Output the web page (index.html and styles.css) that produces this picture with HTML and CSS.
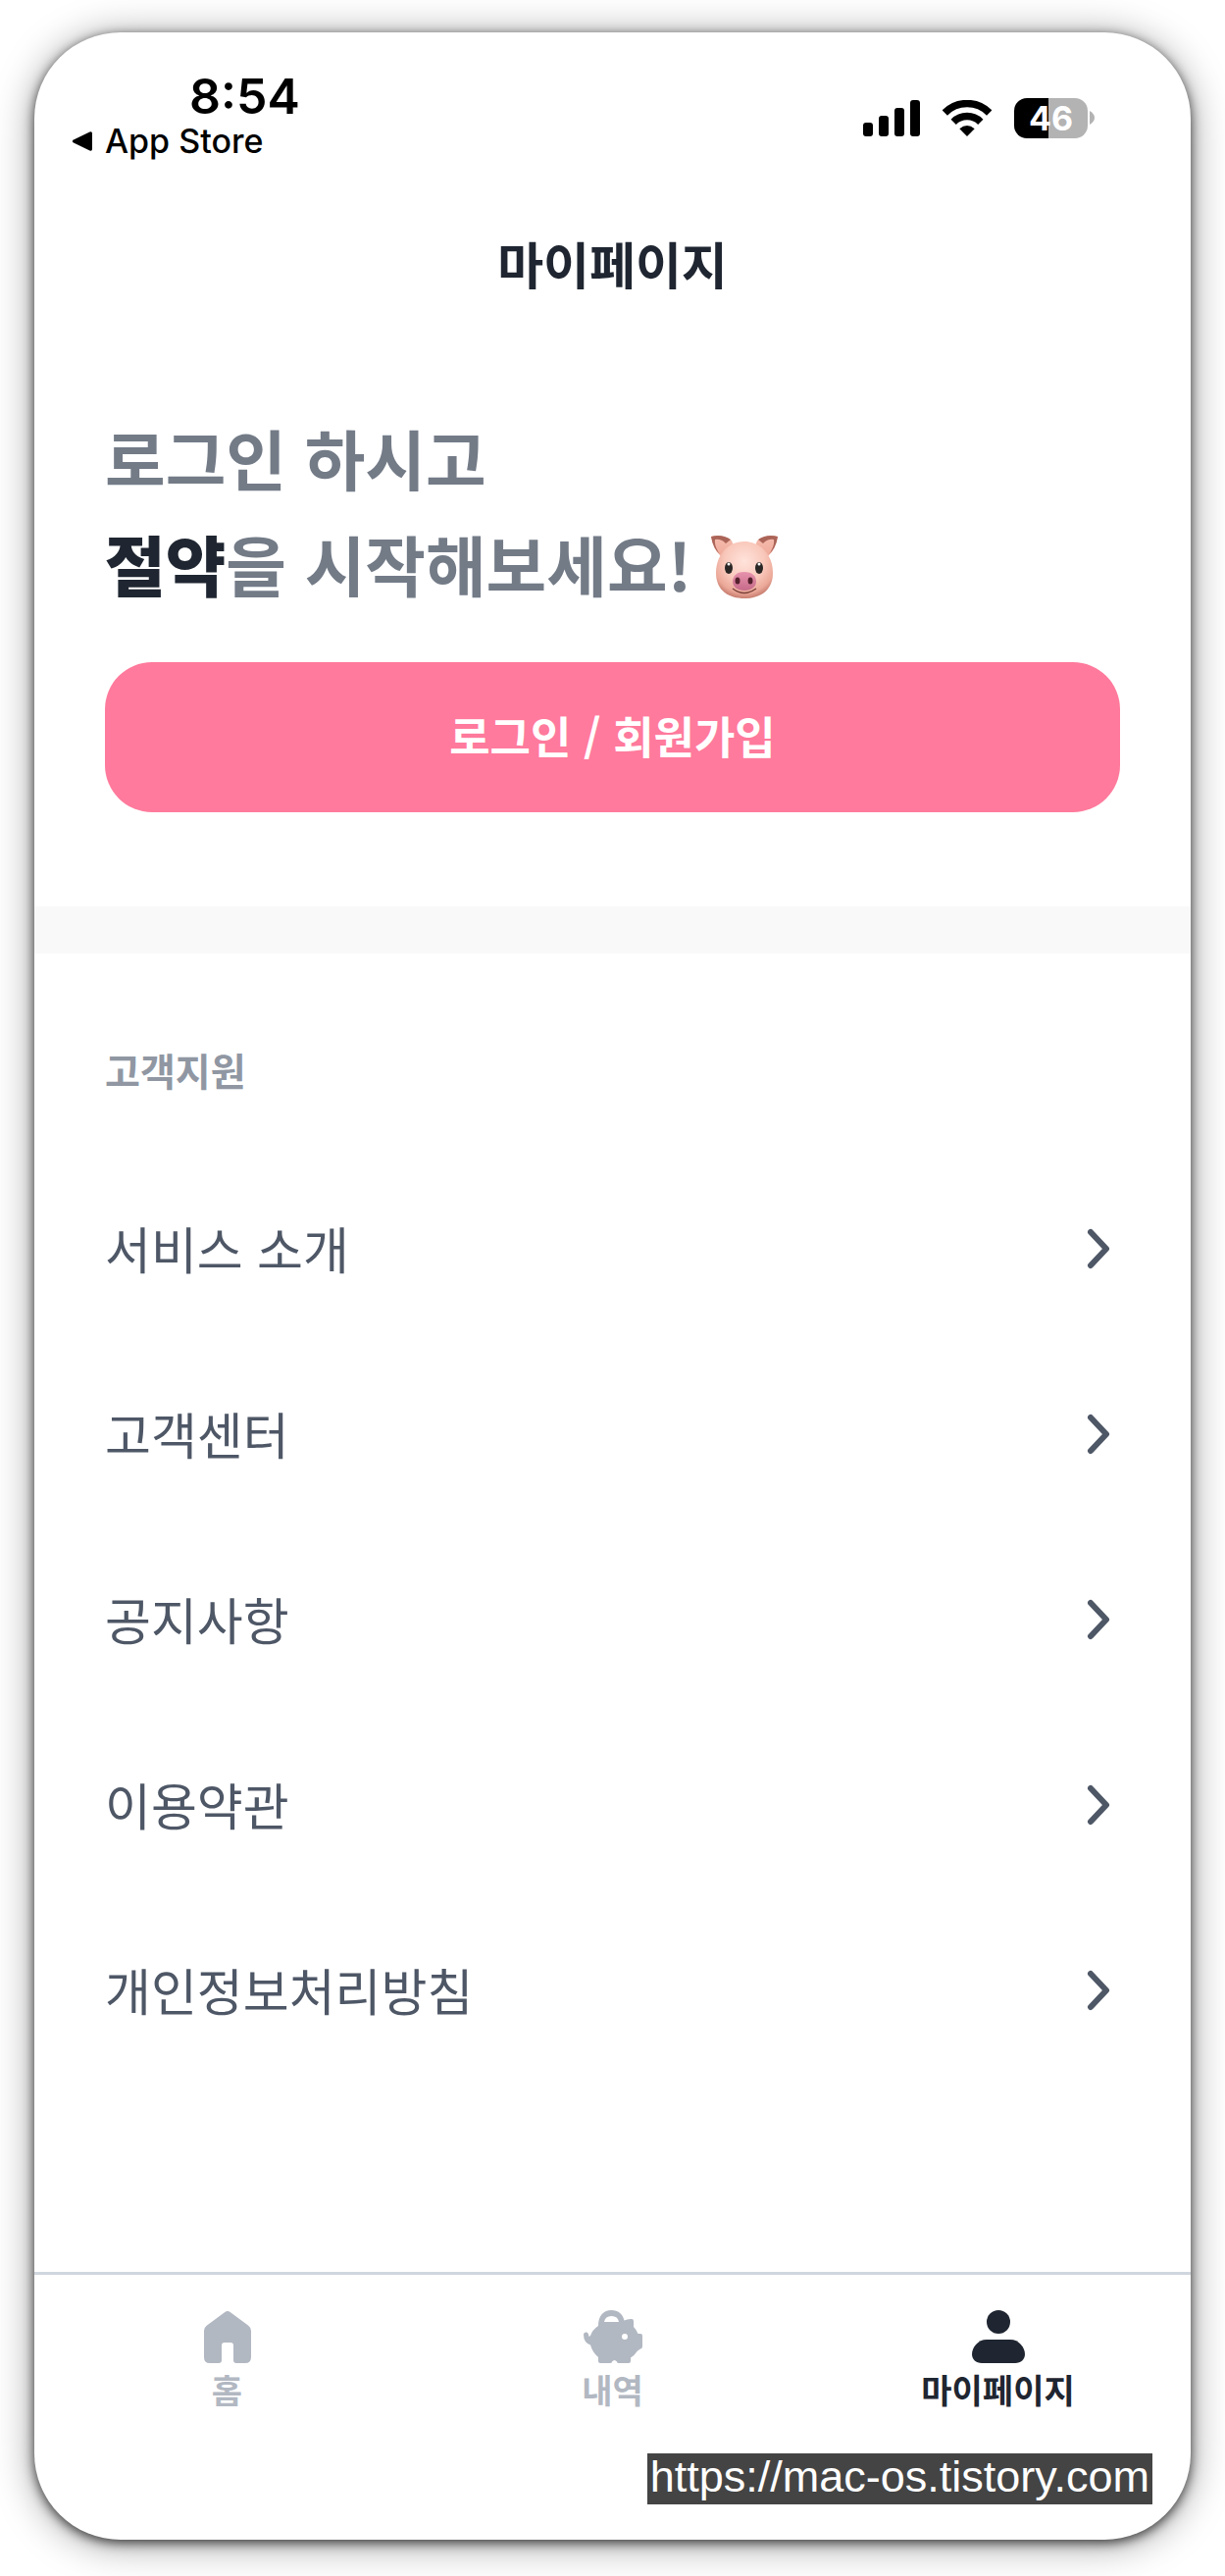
FILE: index.html
```html
<!DOCTYPE html>
<html lang="ko">

<head>
    <meta charset="UTF-8">
    <meta name="viewport" content="width=device-width, initial-scale=1.0">
    <title>마이페이지</title>
    <link rel="stylesheet" href="styles.css">
</head>

<body>
    <div class="phone">
        <div class="status-bar">
            <div class="status-left">
                <span class="time">8:54</span>
                <a href="#" class="back-app">
                    <svg width="22" height="22" viewBox="0 0 22 22"><path d="M2.5 9.2 18.5 1.4Q21 .6 21 3V19Q21 21.400 18.500 20.600L2.500 12.800Q-1 11 2.500 9.200Z"/></svg>
                    App Store
                </a>
            </div>
            <div class="status-icons">
                <svg width="58" height="37" viewBox="0 0 58 37">
                    <rect x="0" y="23" width="10" height="14" rx="3"/>
                    <rect x="16" y="16" width="10" height="21" rx="3"/>
                    <rect x="32" y="8" width="10" height="29" rx="3"/>
                    <rect x="48" y="0" width="10" height="37" rx="3"/>
                </svg>
                <svg width="50" height="37" viewBox="0 0 50 37">
                    <path d="M2.300 13A32 32 0 0 1 47.700 13" fill="none" stroke="#000" stroke-width="7.500"/>
                    <path d="M11.200 22.300A19.500 19.500 0 0 1 38.800 22.300" fill="none" stroke="#000" stroke-width="7.500"/>
                    <path d="M25 37 17.300 29.300Q25 22.700 32.700 29.300Z"/>
                </svg>
                <div class="battery">
                    <span class="battery-level">46</span>
                    <svg width="5" height="14" viewBox="0 0 5 14"><path d="M0 0Q5 3 5 7T0 14Z" fill="#b3b3b3"/></svg>
                </div>
            </div>
        </div>

        <header class="page-header">
            <h1>마이페이지</h1>
        </header>

        <section class="hero">
            <h2>로그인 하시고<br><strong>절약</strong>을 시작해보세요!
                <svg class="pig" width="70" height="66" viewBox="0 0 70 66" role="img" aria-label="돼지">
                    <defs>
                        <radialGradient id="face" cx=".5" cy=".35" r=".65">
                            <stop offset="0" stop-color="#ffe3db"/>
                            <stop offset=".55" stop-color="#f9c8bb"/>
                            <stop offset=".85" stop-color="#eba898"/>
                            <stop offset="1" stop-color="#c87e70"/>
                        </radialGradient>
                        <linearGradient id="snout" x1="0" y1="0" x2="0" y2="1">
                            <stop offset="0" stop-color="#e793ad"/>
                            <stop offset="1" stop-color="#c66a89"/>
                        </linearGradient>
                        <linearGradient id="ear" x1="0" y1="0" x2="0" y2="1">
                            <stop offset="0" stop-color="#f4bcae"/>
                            <stop offset="1" stop-color="#f0ab9b"/>
                        </linearGradient>
                    </defs>
                    <path d="M1 2Q12-1 22 6L24 12 11 22Q3 15 1 2Z" fill="url(#ear)"/>
                    <path d="M1 2Q12-1 21 5L16 9Q11 4 5 5 4 12 10 20 3 14 1 2Z" fill="#ab6458"/>
                    <path d="M69 2Q58-1 48 6L46 12 59 22Q67 15 69 2Z" fill="url(#ear)"/>
                    <path d="M69 2Q58-1 49 5L54 9Q59 4 65 5 66 12 60 20 67 14 69 2Z" fill="#ab6458"/>
                    <path d="M35 7C17 7 6 22 6 39C6 57 19 65 35 65S64 57 64 39C64 22 53 7 35 7Z" fill="url(#face)"/>
                    <ellipse cx="19" cy="34" rx="4" ry="6" fill="#292625"/>
                    <ellipse cx="50" cy="34" rx="4" ry="6" fill="#292625"/>
                    <circle cx="19" cy="30" r="1.500" fill="#fff"/>
                    <circle cx="50" cy="30" r="1.500" fill="#fff"/>
                    <path d="M23 55Q35 64 47 55" fill="none" stroke="#7a4039" stroke-width="1.500"/>
                    <path d="M35 38C26 38 23 43 23 48S28 57 35 57 47 53 47 48 44 38 35 38Z" fill="url(#snout)"/>
                    <ellipse cx="28" cy="47" rx="2.500" ry="3.500" fill="#54202d"/>
                    <ellipse cx="41" cy="47" rx="2.500" ry="3.500" fill="#54202d"/>
                </svg>
            </h2>
            <button type="button" class="login-button">로그인 / 회원가입</button>
        </section>

        <section class="support">
            <h3>고객지원</h3>
            <nav class="menu">
                <a href="#">서비스 소개 <svg class="chevron" viewBox="0 0 24 42"><path d="M4 4 20 21 4 38"/></svg></a>
                <a href="#">고객센터 <svg class="chevron" viewBox="0 0 24 42"><path d="M4 4 20 21 4 38"/></svg></a>
                <a href="#">공지사항 <svg class="chevron" viewBox="0 0 24 42"><path d="M4 4 20 21 4 38"/></svg></a>
                <a href="#">이용약관 <svg class="chevron" viewBox="0 0 24 42"><path d="M4 4 20 21 4 38"/></svg></a>
                <a href="#">개인정보처리방침 <svg class="chevron" viewBox="0 0 24 42"><path d="M4 4 20 21 4 38"/></svg></a>
            </nav>
        </section>

        <nav class="tab-bar">
            <a href="#">
                <svg width="50" height="54" viewBox="0 0 50 54">
                    <path d="M22 2.200Q25 0 28 2.200L46 15.500Q49 17.700 49 21V48Q49 54 43 54H34Q31 54 31 51V36Q31 33 28 33H22Q19 33 19 36V51Q19 54 16 54H7Q1 54 1 48V21Q1 17.700 4 15.500Z"/>
                </svg>
                홈
            </a>
            <a href="#">
                <svg width="60" height="54" viewBox="0 0 60 54">
                    <path fill-rule="evenodd" d="M15 16C15 6 20 0 28.500 0C35 0 40 4 41.500 10.500Q45 8.700 49 9Q51 9 51 11V17Q54 20 55.500 24H58Q60 24 60 26V37Q60 39 58 39.500L55 41.500Q52 46 48 48.500V52Q48 54 46 54H36Q34 54 34 52.500Q31.500 49.500 29 52.500Q29 54 27 54H17Q15 54 15 52V48Q9 43 7 35.500Q0 33 0 25Q0 22.500 2.700 22.500Q5 22.500 5.500 27L7 26Q9 20 15 16ZM21 12H36Q35 6 28.500 6T21 12ZM42 24A3 3 0 1 0 42 30A3 3 0 1 0 42 24Z"/>
                </svg>
                내역
            </a>
            <a href="#" class="active" aria-current="page">
                <svg width="54" height="54" viewBox="0 0 54 54">
                    <circle cx="27" cy="12" r="12"/>
                    <path d="M15 30H39C48 30 54 38 54 45C54 50 50 54 44 54H10C4 54 0 50 0 45C0 38 6 30 15 30Z"/>
                </svg>
                마이페이지
            </a>
        </nav>

        <a href="https://mac-os.tistory.com" class="watermark">https://mac-os.tistory.com</a>
    </div>
</body>

</html>
```
FILE: styles.css
```css
* {
    box-sizing: border-box;
}

body {
    margin: 0;
    padding: 33px 35px 37px;
    background: #fff;
    font-family: "Noto Sans CJK KR", sans-serif;
    color: #1f2631;
}

a {
    color: inherit;
    text-decoration: none;
}

h1,
h2,
h3 {
    margin: 0;
}

.phone {
    position: relative;
    display: flex;
    flex-direction: column;
    min-height: calc(100vh - 70px);
    background: #fff;
    border-radius: 88px;
    box-shadow: 0 3px 12px rgba(0, 0, 0, 0.7), 0 4px 40px rgba(0, 0, 0, 0.4);
}

/* Status bar */
.status-bar {
    display: flex;
    justify-content: space-between;
    align-items: center;
    padding: 37px 98px 0 38px;
    font-family: Inter, sans-serif;
    color: #000;
}

.status-left {
    display: flex;
    flex-direction: column;
}

.time {
    padding-left: 120px;
    font-size: 50px;
    font-weight: 600;
    line-height: 56px;
}

.back-app {
    display: flex;
    align-items: center;
    gap: 12px;
    font-size: 34px;
    font-weight: 500;
    line-height: 36px;
}

.status-icons {
    display: flex;
    align-items: center;
    gap: 23px;
    padding-top: 8px;
}

.battery {
    display: flex;
    align-items: center;
    gap: 2px;
}

.battery-level {
    width: 75px;
    border-radius: 13px;
    background: linear-gradient(90deg, #000 47%, #b3b3b3 47%);
    color: #fff;
    font-size: 34px;
    font-weight: 700;
    line-height: 41px;
    text-align: center;
}

/* Title and login */
.page-header {
    padding: 70px 0 72px;
    text-align: center;
}

.page-header h1 {
    font-size: 51px;
    font-weight: 700;
    line-height: 72px;
}

.hero {
    padding: 36px 72px 96px;
    border-bottom: 48px solid #f9f9f9;
}

.hero h2 {
    margin-bottom: 47px;
    color: #737b87;
    font-size: 67px;
    font-weight: 700;
    line-height: 108px;
}

.hero strong {
    color: #1f2631;
}

.pig {
    vertical-align: -8px;
}

.login-button {
    display: block;
    width: 100%;
    padding: 38px 40px 42px;
    border: none;
    border-radius: 48px;
    background: #ff7a9c;
    color: #fff;
    font-family: inherit;
    font-size: 45px;
    font-weight: 700;
    line-height: 73px;
    cursor: pointer;
}

/* Customer support menu */
.support {
    padding: 88px 72px 96px;
}

.support h3 {
    margin-bottom: 58px;
    color: #9097a3;
    font-size: 39px;
    font-weight: 700;
    line-height: 60px;
}

.menu a {
    display: flex;
    justify-content: space-between;
    align-items: center;
    padding: 58px 10px 58px 0;
    color: #4e5766;
    font-size: 51px;
    line-height: 73px;
}

.chevron {
    width: 24px;
    height: 42px;
    fill: none;
    stroke: #4e5766;
    stroke-width: 6;
    stroke-linecap: round;
    stroke-linejoin: round;
}

/* Bottom tabs */
.tab-bar {
    display: flex;
    margin-top: auto;
    padding: 36px 0 132px;
    border-top: 3px solid #d1d6de;
}

.tab-bar a {
    flex: 1;
    display: flex;
    flex-direction: column;
    align-items: center;
    gap: 6px;
    color: #b2b8c2;
    font-size: 34px;
    font-weight: 700;
    line-height: 42px;
}

.tab-bar svg {
    fill: currentColor;
}

.tab-bar .active {
    color: #1f2631;
}

.watermark {
    position: absolute;
    right: 39px;
    bottom: 36px;
    padding: 0 3px 4px;
    background: #444;
    color: #fff;
    font-family: "Liberation Sans", Arial, sans-serif;
    font-size: 45px;
    line-height: 48px;
}
```
